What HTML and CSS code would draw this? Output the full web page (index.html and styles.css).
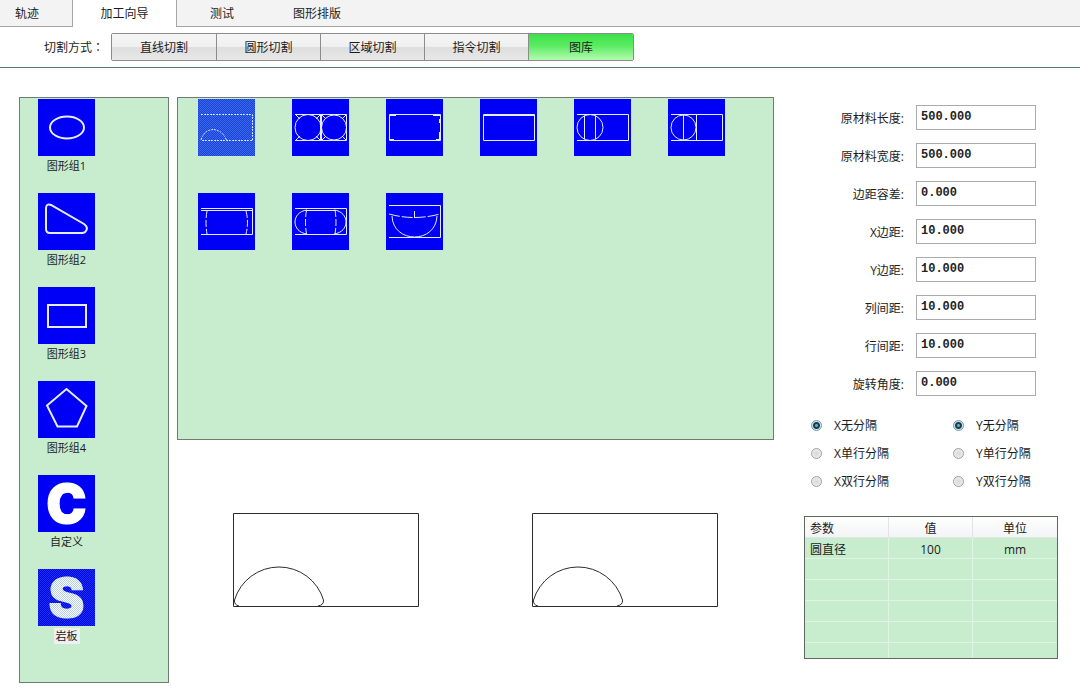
FILE: index.html
```html
<!DOCTYPE html>
<html lang="zh-CN">
<head>
<meta charset="utf-8">
<meta name="viewport" content="width=device-width, initial-scale=1">
<title>加工向导</title>
<link rel="stylesheet" href="styles.css">
</head>
<body class="app">
<nav class="tabs">
  <button class="tab tab-first" type="button">轨迹</button>
  <button class="tab tab-active" type="button">加工向导</button>
  <button class="tab tab-test" type="button">测试</button>
  <button class="tab" type="button">图形排版</button>
</nav>
<div class="modes">
  <span class="modes-label">切割方式<span class="colon" lang="zh-TW">：</span></span>
  <div class="segments">
    <button class="segment" type="button">直线切割</button>
    <button class="segment" type="button">圆形切割</button>
    <button class="segment" type="button">区域切割</button>
    <button class="segment" type="button">指令切割</button>
    <button class="segment segment-active" type="button">图库</button>
  </div>
</div>
<main class="main">
  <aside class="panel groups">
    <button class="group" type="button">
      <span class="tile"><svg class="draw bold" viewBox="0 0 57 57"><ellipse cx="29" cy="28.5" rx="17" ry="11"/></svg></span>
      <span class="group-name">图形组1</span>
    </button>
    <button class="group" type="button">
      <span class="tile"><svg class="draw bold" viewBox="0 0 57 57"><path d="M8 15Q8.500 10 13 12L46 31Q50 34 48.500 37Q47.500 40 44 40H12Q8 40 8 36Z"/></svg></span>
      <span class="group-name">图形组2</span>
    </button>
    <button class="group" type="button">
      <span class="tile"><svg class="draw bold" viewBox="0 0 57 57"><rect x="10" y="18" width="38" height="22"/></svg></span>
      <span class="group-name">图形组3</span>
    </button>
    <button class="group" type="button">
      <span class="tile"><svg class="draw bold" viewBox="0 0 57 57"><path d="M28.500 8L48.500 25L39 45.500H19.500L9 24.500Z"/></svg></span>
      <span class="group-name">图形组4</span>
    </button>
    <button class="group" type="button">
      <span class="tile tile-letter">C</span>
      <span class="group-name">自定义</span>
    </button>
    <button class="group" type="button">
      <span class="tile tile-letter tile-dither">S</span>
      <span class="group-name group-name-active">岩板</span>
    </button>
  </aside>
  <section class="work">
    <div class="panel gallery">
      <button class="tile tile-picked" type="button" aria-label="图形 1"><svg class="draw" viewBox="0 0 57 57"><path stroke-dasharray="2 1" d="M3 15.500H54.500V41.500H3M3 41Q6 31 15 30.500Q24 31 28.500 41"/></svg></button>
      <button class="tile" type="button" aria-label="图形 2"><svg class="draw" viewBox="0 0 57 57"><path d="M3 15.500H54.500V41.500H3M28.500 16V41M29.500 16V41M4 16L8 20M4 41L8 37M28 16L24 20M28 41L24 37M30 16L34 20M30 41L34 37M54 16L50 20M54 41L50 37"/><circle cx="16" cy="28.500" r="13"/><circle cx="42" cy="28.500" r="12.500"/></svg></button>
      <button class="tile" type="button" aria-label="图形 3"><svg class="draw" viewBox="0 0 57 57"><path d="M3.500 15.500H54.500V41.500H3.500ZM4 16.500H10M47 16.500H54M53.500 20V24M53.500 33V41M4 40.500H8M50 40.500H54"/></svg></button>
      <button class="tile" type="button" aria-label="图形 4"><svg class="draw" viewBox="0 0 57 57"><path d="M3.500 15.500H54.500V41.500H3.500ZM4 16.500H54"/></svg></button>
      <button class="tile" type="button" aria-label="图形 5"><svg class="draw" viewBox="0 0 57 57"><path d="M3 15.500H54.500V41.500H3M10.500 17V40M21.500 17V40"/><circle cx="16" cy="28.500" r="13"/></svg></button>
      <button class="tile" type="button" aria-label="图形 6"><svg class="draw" viewBox="0 0 57 57"><path d="M3 15.500H54.500V41.500H3M15.500 16V41M28.500 16V41"/><circle cx="15.500" cy="28.500" r="12.500"/></svg></button>
      <button class="tile" type="button" aria-label="图形 7"><svg class="draw" viewBox="0 0 57 57"><path d="M3 15.500H54.500V41.500H3M3 17.500H54"/><path stroke-dasharray="7 2" d="M9 18Q7 29 9 41M48 18Q51 29 48 41"/></svg></button>
      <button class="tile" type="button" aria-label="图形 8"><svg class="draw" viewBox="0 0 57 57"><path d="M3 15.500H54.500V41.500H3M13 17.500H44M15 17C-1 19 -1 39 15 41M42 17C58 19 58 39 42 41"/><path stroke-dasharray="7 2" d="M14.500 17Q12.500 29 14.500 41M43 17Q45 29 43 41"/></svg></button>
      <button class="tile" type="button" aria-label="图形 9"><svg class="draw" viewBox="0 0 57 57"><path d="M3 12.500H54.500V44.500H3M28.500 18V25M6 23C7 51 50 51 51 23"/><path stroke-dasharray="11 2" d="M3 21Q28 28 54 21"/></svg></button>
    </div>
    <div class="previews">
      <svg class="preview" viewBox="0 0 186 94"><path d="M.5.5H185.500V93.500H.5ZM6 93Q1 92 1.500 87A46.500 46.500 0 0 1 90.500 87Q91 92 85 93"/></svg>
      <svg class="preview" viewBox="0 0 186 94"><path d="M.5.5H185.500V93.500H.5ZM6 93Q1 92 1.500 87A46.500 46.500 0 0 1 90.500 87Q91 92 85 93"/></svg>
    </div>
  </section>
  <section class="settings">
    <form class="fields">
      <label class="field-name" for="len">原材料长度:</label><input class="field" id="len" type="text" value="500.000">
      <label class="field-name" for="wid">原材料宽度:</label><input class="field" id="wid" type="text" value="500.000">
      <label class="field-name" for="tol">边距容差:</label><input class="field" id="tol" type="text" value="0.000">
      <label class="field-name" for="mx">X边距:</label><input class="field" id="mx" type="text" value="10.000">
      <label class="field-name" for="my">Y边距:</label><input class="field" id="my" type="text" value="10.000">
      <label class="field-name" for="col">列间距:</label><input class="field" id="col" type="text" value="10.000">
      <label class="field-name" for="row">行间距:</label><input class="field" id="row" type="text" value="10.000">
      <label class="field-name" for="rot">旋转角度:</label><input class="field" id="rot" type="text" value="0.000">
    </form>
    <div class="splits">
      <label class="option"><input class="radio" type="radio" name="x" checked>X无分隔</label>
      <label class="option"><input class="radio" type="radio" name="y" checked>Y无分隔</label>
      <label class="option"><input class="radio" type="radio" name="x">X单行分隔</label>
      <label class="option"><input class="radio" type="radio" name="y">Y单行分隔</label>
      <label class="option"><input class="radio" type="radio" name="x">X双行分隔</label>
      <label class="option"><input class="radio" type="radio" name="y">Y双行分隔</label>
    </div>
    <table class="params">
      <thead><tr><th>参数</th><th>值</th><th>单位</th></tr></thead>
      <tbody>
        <tr><td>圆直径</td><td>100</td><td>mm</td></tr>
        <tr><td></td><td></td><td></td></tr>
        <tr><td></td><td></td><td></td></tr>
        <tr><td></td><td></td><td></td></tr>
        <tr><td></td><td></td><td></td></tr>
        <tr class="row-cut"><td></td><td></td><td></td></tr>
      </tbody>
    </table>
  </section>
</main>
</body>
</html>
```
FILE: styles.css
```css
* {
  box-sizing: border-box;
}

.app {
  display: flex;
  flex-direction: column;
  min-height: 100vh;
  margin: 0;
  background: #fff;
  color: #1c1c1c;
  font: 12px/16px "Open Sans", "Noto Sans CJK SC", sans-serif;
}

button {
  margin: 0;
  padding: 0;
  border: 0;
  background: none;
  color: inherit;
  font: inherit;
}

/* Top tabs */
.tabs {
  display: flex;
  height: 27px;
  background: #f3f3f3;
  box-shadow: inset 0 -1px #a6a6a6;
}

.tab {
  padding: 0 26px;
}

.tab-first {
  width: 73px;
  padding: 0 18px 0 0;
  border-right: 1px solid #a6a6a6;
}

.tab-active {
  width: 104px;
  border-right: 1px solid #a6a6a6;
  background: #fff;
}

.tab-test {
  width: 90px;
  padding: 0;
}

/* Cutting mode bar */
.modes {
  display: flex;
  align-items: center;
  height: 41px;
  padding-left: 44px;
  border-bottom: 1px solid #587870;
}

.modes-label {
  width: 67px;
  padding-top: 1px;
  white-space: nowrap;
}

.colon {
  font-family: "Noto Sans CJK TC", sans-serif;
}

.segments {
  display: flex;
  height: 28px;
  border: 1px solid #8c8c8c;
  border-radius: 2px;
  overflow: hidden;
}

.segment {
  width: 105px;
  padding-top: 1px;
  border-right: 1px solid #8c8c8c;
  background: linear-gradient(#f6f6f6, #efefef 50%, #dedede 52%, #e8e8e8);
}

.segment + .segment {
  width: 104px;
}

.segment-active {
  border-right: 0;
  background: linear-gradient(#3ee04a, #5aec62 45%, #b4fbb0);
}

/* Three-column work area */
.main {
  display: grid;
  flex: 1;
  grid-template-columns: 150px 1fr 254px;
  padding: 29px 22px 15px 19px;
}

.panel {
  border: 1px solid #707c72;
  background: #c8edce;
}

.groups {
  display: flex;
  flex-direction: column;
  align-items: flex-start;
  gap: 19px;
  padding: 1px 18px;
}

.group {
  display: flex;
  flex-direction: column;
  align-items: center;
  gap: 2px;
  width: 57px;
}

.group-name {
  padding: 0 2px;
  font-size: 11px;
  line-height: 16px;
}

.group-name-active {
  background: #f0f0f0;
}

.tile {
  display: block;
  position: relative;
  width: 57px;
  height: 57px;
  background: #0000f6;
}

.draw {
  display: block;
  width: 57px;
  height: 57px;
  fill: none;
  stroke: #e8ecff;
  stroke-width: 1;
}

.bold {
  stroke-width: 2;
}

.tile-letter {
  color: #fff;
  font: 900 54px/57px Inter, sans-serif;
  text-align: center;
  -webkit-text-stroke: 1px #fff;
}

.tile-dither::after,
.tile-picked::after {
  content: "";
  position: absolute;
  inset: 0;
  background: repeating-conic-gradient(#4088c8 0 25%, transparent 0 50%) 0 0 / 2px 2px;
  opacity: 0.4;
}

.tile-picked {
  background: #1c40e0;
}

.tile-picked::after {
  background: repeating-conic-gradient(#60a8e8 0 25%, transparent 0 50%) 0 0 / 2px 2px;
}

.work {
  display: flex;
  flex-direction: column;
  gap: 73px;
  margin: 0 30px 0 8px;
}

.gallery {
  display: grid;
  grid-template-columns: repeat(auto-fill, 57px);
  align-content: start;
  gap: 37px;
  min-height: 343px;
  padding: 1px 20px;
}

.previews {
  display: grid;
  grid-template-columns: 1fr 1fr;
  justify-items: center;
}

.preview {
  width: 186px;
  height: 94px;
  fill: none;
  stroke: #2c2c2c;
}

/* Settings column */
.fields {
  display: grid;
  grid-template-columns: 1fr 120px;
  align-items: center;
  gap: 13px 12px;
  padding: 8px 22px 0 0;
  text-align: right;
}

.field-name {
  padding-top: 2px;
}

.field {
  width: 100%;
  height: 25px;
  padding: 0 4px 1px;
  border: 1px solid #ababab;
  background: #fff;
  color: #222;
  font: 700 12px/16px "Liberation Mono", monospace;
}

.splits {
  display: grid;
  grid-template-columns: 142px 1fr;
  gap: 10px 0;
  padding: 20px 0 26px 7px;
}

.option {
  display: flex;
  align-items: center;
  gap: 12px;
  padding-top: 2px;
}

.radio {
  appearance: none;
  width: 11px;
  height: 11px;
  margin: 0 0 2px;
  border: 1px solid #a0a0a0;
  border-radius: 50%;
  background: radial-gradient(#d8d8d8, #f4f4f4);
}

.radio:checked {
  border-color: #7899a8;
  background: radial-gradient(circle, #68a8b8 0 1px, #163f54 2px 3px, #cfe8f0 4px);
}

.params {
  width: 100%;
  border: 1px solid #606860;
  border-spacing: 0;
  table-layout: fixed;
  background: #c8edce;
  text-align: center;
}

.params th {
  height: 21px;
  padding: 3px 0 0;
  border-right: 1px solid #e2e4e8;
  border-bottom: 1px solid #e2e4e8;
  background: linear-gradient(#fff, #f3f4f6);
  font-weight: 400;
}

.params td {
  height: 21px;
  padding: 3px 0 0;
  border-right: 1px solid #dff5e2;
  border-bottom: 1px solid #dff5e2;
}

.params th:first-child,
.params td:first-child {
  padding-left: 5px;
  text-align: left;
}

.params th:last-child,
.params td:last-child {
  border-right: 0;
}

.params .row-cut td {
  height: 15px;
  border-bottom: 0;
}
```
